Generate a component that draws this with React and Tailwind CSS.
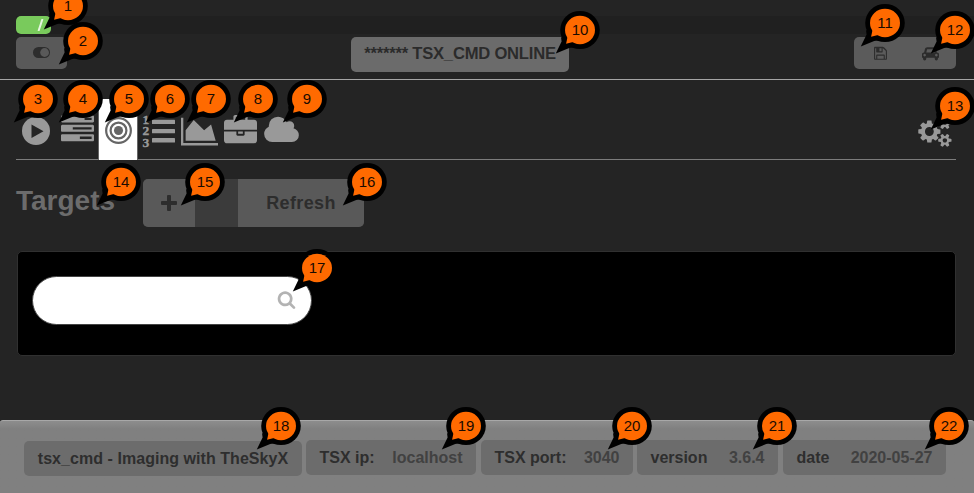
import React from "react";

const paths = {
  tasks:
    "M1024 1408h640v-128h-640v128zm-384-512h1024v-128h-1024v128zm640-512h384v-128h-384v128zm512 832v256q0 26-19 45t-45 19h-1664q-26 0-45-19t-19-45v-256q0-26 19-45t45-19h1664q26 0 45 19t19 45zm0-512v256q0 26-19 45t-45 19h-1664q-26 0-45-19t-19-45v-256q0-26 19-45t45-19h1664q26 0 45 19t19 45zm0-512v256q0 26-19 45t-45 19h-1664q-26 0-45-19t-19-45v-256q0-26 19-45t45-19h1664q26 0 45 19t19 45z",
  chart:
    "M2048 1536v128h-2048v-1536h128v1408h1920zm-384-1024l256 896h-1664v-576l448-576 576 576z",
  briefcase:
    "M640 256h512v-128h-512v128zm1152 640v480q0 66-47 113t-113 47h-1472q-66 0-113-47t-47-113v-480h672v160q0 26 19 45t45 19h320q26 0 45-19t19-45v-160h672zm-768 0v128h-256v-128h256zm768-480v384h-1792v-384q0-66 47-113t113-47h352v-160q0-40 28-68t68-28h576q40 0 68 28t28 68v160h352q66 0 113 47t47 113z",
  cloud:
    "M1984 1152q0 159-112.5 271.5t-271.5 112.5h-1088q-185 0-316.5-131.5t-131.5-316.5q0-132 71-241.5t187-163.5q-2-28-2-43 0-212 150-362t362-150q158 0 286.5 88t187.5 230q70-62 166-62 106 0 181 75t75 181q0 75-41 138 129 30 213 134.5t84 239.5z",
  save:
    "M512 1536h768v-384h-768v384zm896 0h128v-896q0-14-10-38.5t-20-34.5l-281-281q-10-10-34-20t-39-10v416q0 40-28 68t-68 28h-576q-40 0-68-28t-28-68v-416h-128v1280h128v-416q0-40 28-68t68-28h832q40 0 68 28t28 68v416zm-384-928v-320q0-13-9.5-22.5t-22.5-9.5h-192q-13 0-22.5 9.5t-9.5 22.5v320q0 13 9.5 22.5t22.5 9.5h192q13 0 22.5-9.5t9.5-22.5zm640 32v896q0 40-28 68t-68 28h-1344q-40 0-68-28t-28-68v-1344q0-40 28-68t68-28h928q40 0 88 20t76 48l280 280q28 28 48 76t20 88z",
  car:
    "M480 1088q0-66-47-113t-113-47-113 47-47 113 47 113 113 47 113-47 47-113zm36-320h1016l-89-357q-2-8-14-17.5t-21-9.5h-768q-9 0-21 9.5t-14 17.5zm1372 320q0-66-47-113t-113-47-113 47-47 113 47 113 113 47 113-47 47-113zm160-96v384q0 14-9 23t-23 9h-96v128q0 80-56 136t-136 56-136-56-56-136v-128h-1024v128q0 80-56 136t-136 56-136-56-56-136v-128h-96q-14 0-23-9t-9-23v-384q0-93 65.5-158.5t158.5-65.5h28l105-419q23-94 104-157.5t179-63.5h768q98 0 179 63.5t104 157.5l105 419h28q93 0 158.5 65.5t65.5 158.5z",
  search:
    "M1216 832q0-185-131.5-316.5t-316.5-131.5-316.5 131.5-131.5 316.5 131.5 316.5 316.5 131.5 316.5-131.5 131.5-316.5zm512 832q0 52-38 90t-90 38q-54 0-90-38l-343-342q-179 124-399 124-143 0-273.5-55.5t-225-150-150-225-55.5-273.5 55.5-273.5 150-225 225-150 273.5-55.5 273.5 55.5 225 150 150 225 55.5 273.5q0 220-124 399l343 343q37 37 37 90z",
  cogs:
    "M896 896q0-106-75-181t-181-75-181 75-75 181 75 181 181 75 181-75 75-181zm768 512q0-52-38-90t-90-38-90 38-38 90q0 53 37.5 90.5t90.5 37.5 90.5-37.5 37.5-90.5zm0-1024q0-52-38-90t-90-38-90 38-38 90q0 53 37.5 90.5t90.5 37.5 90.5-37.5 37.5-90.5zm-384 421v185q0 10-7 19.5t-16 10.5l-155 24q-11 35-32 76 34 48 90 115 7 11 7 20 0 12-7 19-23 30-82.5 89.5t-78.5 59.5q-11 0-21-7l-115-90q-37 19-77 31-11 108-23 155-7 24-30 24h-186q-11 0-20-7.5t-10-17.5l-23-153q-34-10-75-31l-118 89q-7 7-20 7-11 0-21-8-144-133-144-160 0-9 7-19 10-14 41-53t47-61q-23-44-35-82l-152-24q-10-1-17-9.5t-7-19.5v-185q0-10 7-19.5t16-10.5l155-24q11-35 32-76-34-48-90-115-7-11-7-20 0-12 7-20 22-30 82-89t79-59q11 0 21 7l115 90q34-18 77-32 11-108 23-154 7-24 30-24h186q11 0 20 7.5t10 17.5l23 153q34 10 75 31l118-89q8-7 20-7 11 0 21 8 144 133 144 160 0 8-7 19-12 16-42 54t-45 60q23 48 34 82l152 23q10 2 17 10.5t7 19.5zm640 533v140q0 16-149 31-12 27-30 52 51 113 51 138 0 4-4 7-122 71-124 71-8 0-46-47t-52-68q-20 2-30 2t-30-2q-14 21-52 68t-46 47q-2 0-124-71-4-3-4-7 0-25 51-138-18-25-30-52-149-15-149-31v-140q0-16 149-31 13-29 30-52-51-113-51-138 0-4 4-7 4-2 35-20t59-34 30-16q8 0 46 46.5t52 67.5q20-2 30-2t30 2q51-71 92-112l6-2q4 0 124 70 4 3 4 7 0 25-51 138 17 23 30 52 149 15 149 31zm0-1024v140q0 16-149 31-12 27-30 52 51 113 51 138 0 4-4 7-122 71-124 71-8 0-46-47t-52-68q-20 2-30 2t-30-2q-14 21-52 68t-46 47q-2 0-124-71-4-3-4-7 0-25 51-138-18-25-30-52-149-15-149-31v-140q0-16 149-31 13-29 30-52-51-113-51-138 0-4 4-7 4-2 35-20t59-34 30-16q8 0 46 46.5t52 67.5q20-2 30-2t30 2q51-71 92-112l6-2q4 0 124 70 4 3 4 7 0 25-51 138 17 23 30 52 149 15 149 31z",
};

function Icon({ name, wide, className }) {
  return (
    <svg viewBox={wide ? "0 0 2048 1792" : "0 0 1792 1792"} fill="currentColor" className={className}>
      <path d={paths[name]} />
    </svg>
  );
}

function ListOl({ className }) {
  return (
    <svg viewBox="0 0 34 34" fill="currentColor" className={className}>
      <g fontFamily="Liberation Serif" fontWeight="bold" fontSize="13.5" stroke="currentColor" strokeWidth="0.4">
        <text x="0.4" y="10">1</text>
        <text x="0.4" y="21.4">2</text>
        <text x="0.4" y="32.8">3</text>
      </g>
      <rect x="10" y="5.7" width="23" height="4.4" rx="0.6" />
      <rect x="10" y="14.9" width="23" height="4.4" rx="0.6" />
      <rect x="10" y="24.1" width="23" height="4.4" rx="0.6" />
    </svg>
  );
}

const callouts = [
  [1, 68, 5.5], [2, 83, 41.3], [3, 38, 99], [4, 82.5, 99], [5, 128.5, 99], [6, 169.5, 99],
  [7, 211, 99], [8, 258, 99], [9, 307, 99], [10, 580, 30.3], [11, 885, 23.3], [12, 955, 30.3],
  [13, 955, 106.3], [14, 121, 182], [15, 205, 182], [16, 367, 182], [17, 317.2, 268],
  [18, 281.3, 426], [19, 466.2, 426], [20, 632.2, 426], [21, 777.2, 426], [22, 949.2, 426],
];

function Callout({ n, x, y }) {
  return (
    <svg className="absolute h-[52px] w-[52px]" style={{ left: x - 26, top: y - 26 }} viewBox="-26 -26 52 52">
      <path d="M-19 7L-18.4 11.5L-24.2 23.6L-10.8 18L-4 17Z" fill="#000" />
      <ellipse rx="19.8" ry="19.1" fill="#000" />
      <ellipse rx="15" ry="14.2" fill="#ff6a00" />
      <path d="M-12.5 7L-13.9 13.8L-7 12Z" fill="#ff6a00" />
      <text y="5.3" textAnchor="middle" fontSize="15" fill="#1a0b00">{n}</text>
    </svg>
  );
}

const pill = "flex h-[35px] items-center rounded-[5px] bg-[#6c6c6c] text-base font-bold whitespace-nowrap text-[#2e2e2e]";

function Detail({ label, value, className }) {
  return (
    <div className={`${pill} justify-between pl-[13.5px] pr-[13.5px] ${className}`}>
      <span>{label}</span>
      <span className="text-[#414141]">{value}</span>
    </div>
  );
}

export default function App() {
  return (
    <div className="relative flex h-[493px] w-[974px] flex-col overflow-hidden bg-[#242424] font-['Liberation_Sans',Arial,sans-serif]">
      <header className="h-20 shrink-0 border-b border-[#a5a5a5] pt-4">
        <div className="ml-4 h-[18px] bg-[#202020]">
          <div className="flex h-full w-[35px] items-center justify-end rounded-[5px] bg-[#79ca5c] pr-[7px] text-[#e6f6df]">
            <svg viewBox="0 0 7 12" className="h-3 w-[7px]"><path d="M5.5 0L1.5 12" stroke="currentColor" strokeWidth="2" /></svg>
          </div>
        </div>
        <div className="mt-[3px] flex items-start pr-[18px] pl-4">
          <button className="flex h-8 w-[51px] items-center justify-center rounded-[5px] bg-[#595959]">
            <svg viewBox="0 0 17 11" className="-mt-px h-[11px] w-[17px]">
              <rect width="17" height="11" rx="5.5" fill="#2d2d2d" />
              <circle cx="11.6" cy="5.5" r="4.4" fill="#595959" />
            </svg>
          </button>
          <div className="ml-[284px] flex h-[35px] w-[218px] items-center justify-center rounded-[5px] bg-[#6b6b6b] text-[16.6px] font-bold tracking-[-0.22px] whitespace-nowrap text-[#2b2b2b]">
            ******* TSX_CMD ONLINE
          </div>
          <div className="ml-auto flex h-8 w-[102px] items-center rounded-[5px] bg-[#5b5b5b] pl-[18.5px] text-[#2c2c2c]">
            <Icon name="save" className="size-[15px]" />
            <Icon name="car" wide className="ml-[34.5px] h-[15px] w-[17px]" />
          </div>
        </div>
      </header>

      <nav className="mr-[18px] ml-4 flex h-20 shrink-0 items-end border-b border-[#7c7c7c] text-[#999]">
        <div className="flex h-full w-[82px] items-start pt-[37px] pl-1.5">
          <svg viewBox="0 0 28 28" className="size-7 shrink-0">
            <circle cx="14" cy="14" r="14" fill="currentColor" />
            <path d="M9.5 7.5L21.5 14.2L9.5 21Z" fill="#242424" />
          </svg>
          <Icon name="tasks" className="-mt-[4px] ml-[10.5px] size-[33px] shrink-0" />
        </div>
        <div className="-mb-px flex h-[61px] w-10 shrink-0 justify-center border-x border-[#666] bg-white pt-[18px] text-[#666]">
          <svg viewBox="0 0 28 28" className="size-[27px]" fill="none" stroke="currentColor">
            <circle cx="14" cy="14" r="4.7" fill="currentColor" stroke="none" />
            <circle cx="14" cy="14" r="8.2" strokeWidth="2.3" />
            <circle cx="14" cy="14" r="12.8" strokeWidth="2.3" />
          </svg>
        </div>
        <div className="flex h-full flex-1 items-start pt-[34px] pl-1">
          <ListOl className="size-[34px] overflow-visible" />
          <Icon name="chart" wide className="mt-[0.5px] ml-[5px] h-[33px] w-[37px]" />
          <Icon name="briefcase" className="mt-[0.5px] ml-[6px] size-[33px]" />
          <Icon name="cloud" wide className="ml-[5.5px] h-[33px] w-[37px]" />
          <Icon name="cogs" wide className="mt-[1.5px] ml-auto mr-[2px] h-[31px] w-[36px]" />
        </div>
      </nav>

      <main className="h-[260px] shrink-0 pr-[18px] pl-4">
        <div className="flex pt-[19px]">
          <h1 className="mt-1 w-[127px] text-[28px] leading-9 font-bold text-[#6c6c6c]">Targets</h1>
          <div className="flex h-12 w-[221px] overflow-hidden rounded-[5px] bg-[#3b3b3b] text-[#2d2d2d]">
            <button className="flex w-[52px] items-center justify-center bg-[#595959]">
              <svg viewBox="0 0 16 16" className="size-4" fill="currentColor">
                <rect y="6" width="16" height="4" rx="1" />
                <rect x="6" width="4" height="16" rx="1" />
              </svg>
            </button>
            <button className="ml-[43px] flex-1 bg-[#595959] text-lg font-bold tracking-[0.35px]">Refresh</button>
          </div>
        </div>
        <div className="mt-6 ml-px h-[105px] rounded-[5px] border border-[#303030] bg-black pt-[23.5px] pl-3.5">
          <div className="flex h-[49px] w-[280px] items-center justify-end rounded-full border border-[#444] bg-white pr-[15px] text-[#b3b3b3]">
            <Icon name="search" className="-mt-px size-[19px]" />
          </div>
        </div>
      </main>

      <footer className="flex flex-1 items-start rounded-t-[3px] border-t border-[#a8a8a8] bg-[#808080] bg-gradient-to-b from-[#8d8d8d] to-[#808080] to-[8px] pt-[19px] pl-6">
        <div className={`${pill} mt-px w-[278px] justify-center tracking-[0.05px]`}>tsx_cmd - Imaging with TheSkyX</div>
        <Detail label="TSX ip:" value="localhost" className="ml-1 w-[170px]" />
        <Detail label="TSX port:" value="3040" className="ml-[5px] w-[152px]" />
        <Detail label="version" value="3.6.4" className="ml-1 w-[141px]" />
        <Detail label="date" value="2020-05-27" className="ml-[5px] w-[163px]" />
      </footer>

      {callouts.map(([n, x, y]) => (
        <Callout key={n} n={n} x={x} y={y} />
      ))}
    </div>
  );
}
